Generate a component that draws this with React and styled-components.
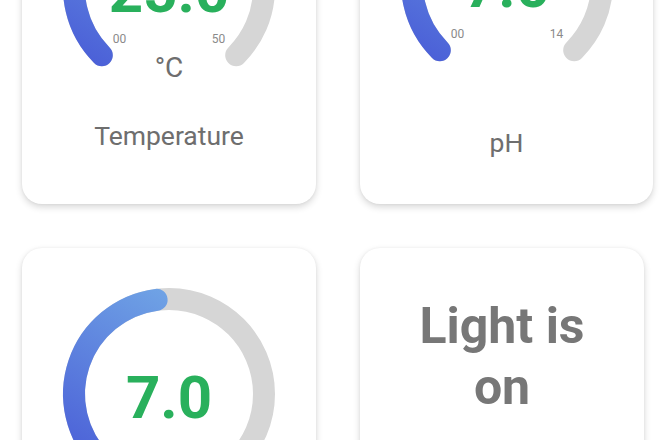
import React from "react";
import styled, { createGlobalStyle } from "styled-components";

const Global = createGlobalStyle`
  html, body { margin: 0; padding: 0; background: #ffffff; }
  body { font-family: Roboto, "Noto Sans", "Liberation Sans", sans-serif; overflow: hidden; }
`;

const Grid = styled.main`
  display: grid;
  grid-template-columns: 294px 293px;
  grid-template-rows: 363px auto;
  column-gap: 44px;
  row-gap: 44px;
  padding-left: 22px;
  margin-top: -159px;
`;

const Card = styled.section`
  width: ${(p) => p.$w || 294}px;
  min-height: 363px;
  box-sizing: border-box;
  background: #fff;
  border-radius: 20px;
  box-shadow: 0 3px 7px rgba(0, 0, 0, 0.16), 0 0 3px rgba(0, 0, 0, 0.05);
  display: flex;
  flex-direction: column;
  align-items: center;
  padding-top: ${(p) => p.$pt}px;
`;

const GaugeSvg = styled.svg`
  display: block;
  width: 240px;
  height: 240px;
  overflow: visible;
`;

const ValueText = styled.text`
  font-family: Roboto, "Liberation Sans", sans-serif;
  font-weight: 700;
  font-size: 60px;
  fill: #29b05c;
`;

const TickText = styled.text`
  font-family: Roboto, "Liberation Sans", sans-serif;
  font-size: 12px;
  fill: #8a8a8a;
`;

const UnitText = styled.text`
  font-family: Roboto, "Liberation Sans", sans-serif;
  font-size: 28px;
  fill: #6e6e6e;
`;

const Label = styled.div`
  margin-top: ${(p) => p.$mt}px;
  font-size: 26.5px;
  line-height: 30px;
  color: #6e6e6e;
`;

const BigText = styled.div`
  font-weight: 700;
  font-size: 50px;
  line-height: 61px;
  color: #777777;
  text-align: center;
`;

const C = 120;
const R = 95;
const SW = 22;

function pt(deg) {
  const a = (deg * Math.PI) / 180;
  return [C + R * Math.sin(a), C - R * Math.cos(a)];
}

function arc(from, to) {
  const [x1, y1] = pt(from);
  const [x2, y2] = pt(to);
  const large = to - from > 180 ? 1 : 0;
  return `M ${x1.toFixed(2)} ${y1.toFixed(2)} A ${R} ${R} 0 ${large} 1 ${x2.toFixed(2)} ${y2.toFixed(2)}`;
}

function Gauge({ id, value, min, max, unit, endDeg = -7.5 }) {
  return (
    <GaugeSvg viewBox="0 0 240 240">
      <defs>
        <linearGradient id={id} gradientUnits="userSpaceOnUse" x1="150" y1="20" x2="40" y2="200">
          <stop offset="0" stopColor="#72a8e6" />
          <stop offset="1" stopColor="#4a5ed7" />
        </linearGradient>
      </defs>
      <path d={arc(-135, 135)} fill="none" stroke="#d6d6d6" strokeWidth={SW} strokeLinecap="round" />
      <path d={arc(-135, endDeg)} fill="none" stroke={`url(#${id})`} strokeWidth={SW} strokeLinecap="round" />
      <ValueText x={C} y={C + 23.5} textAnchor="middle">{value}</ValueText>
      <TickText x={C - 49.5} y={C + 55} textAnchor="middle">{min}</TickText>
      <TickText x={C + 49.5} y={C + 55} textAnchor="middle">{max}</TickText>
      {unit && (
        <UnitText x={C} y={C + 89} textAnchor="middle">{unit}</UnitText>
      )}
    </GaugeSvg>
  );
}

export default function App() {
  return (
    <>
      <Global />
      <Grid>
        <Card $pt={27}>
          <Gauge id="g1" value="25.0" min="00" max="50" unit="°C" />
          <Label $mt={13}>Temperature</Label>
        </Card>
        <Card $w={293} $pt={22}>
          <Gauge id="g2" value="7.0" min="00" max="14" />
          <Label $mt={25}>pH</Label>
        </Card>
        <Card $pt={26}>
          <Gauge id="g3" value="7.0" min="00" max="14" />
          <Label $mt={25}>Turbidity</Label>
        </Card>
        <Card $w={284} $pt={48}>
          <BigText>
            Light is
            <br />
            on
          </BigText>
        </Card>
      </Grid>
    </>
  );
}
